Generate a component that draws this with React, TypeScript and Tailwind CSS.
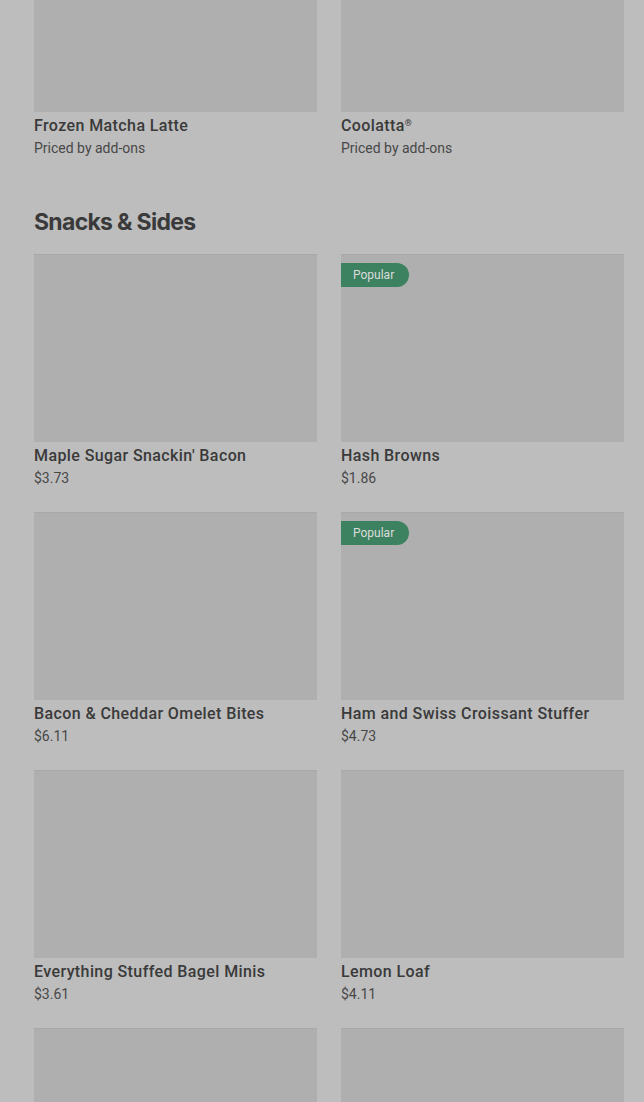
import React from "react";

type Item = { name: React.ReactNode; price: string; popular?: boolean };

const top: Item[] = [
  { name: "Frozen Matcha Latte", price: "Priced by add-ons" },
  {
    name: (
      <>
        Coolatta<sup className="text-[9px] top-[-0.6em]">®</sup>
      </>
    ),
    price: "Priced by add-ons",
  },
];

const snacks: Item[] = [
  { name: "Maple Sugar Snackin' Bacon", price: "$3.73" },
  { name: "Hash Browns", price: "$1.86", popular: true },
  { name: "Bacon & Cheddar Omelet Bites", price: "$6.11" },
  { name: "Ham and Swiss Croissant Stuffer", price: "$4.73", popular: true },
  { name: "Everything Stuffed Bagel Minis", price: "$3.61" },
  { name: "Lemon Loaf", price: "$4.11" },
  { name: "", price: "" },
  { name: "", price: "" },
];

function Card({ item }: { item: Item }) {
  return (
    <div className="flex flex-col">
      <div className="relative h-[188px] bg-[#afafaf] border-t border-[#a8a8a8]">
        {item.popular && (
          <div className="absolute left-0 top-[8px] h-[24px] w-[68px] rounded-r-full bg-[#3c8260] flex items-center pl-[12px] text-[12px] text-[#dcdcdc] font-['Roboto',sans-serif]">
            Popular
          </div>
        )}
      </div>
      {item.name && (
        <>
          <div className="mt-[2px] h-[24px] leading-[24px] text-[16px] font-medium tracking-[0.4px] text-[#3a3a3a] font-['Roboto',sans-serif]">
            {item.name}
          </div>
          <div className="h-[20px] leading-[20px] text-[14px] text-[#484848] font-['Roboto',sans-serif]">
            {item.price}
          </div>
        </>
      )}
    </div>
  );
}

export default function App() {
  return (
    <div className="w-[644px] h-[1102px] overflow-hidden bg-[#bdbdbd]">
      <div className="-mt-[76px] pl-[34px] pr-[20px]">
        <div className="grid grid-cols-2 gap-x-[24px]">
          {top.map((it, i) => (
            <Card key={i} item={it} />
          ))}
        </div>
        <h2 className="mt-[48px] h-[32px] leading-[32px] text-[23px] font-bold tracking-[-0.7px] text-[#3a3a3a] font-['Inter',sans-serif]">
          Snacks &amp; Sides
        </h2>
        <div className="mt-[16px] grid grid-cols-2 gap-x-[24px] gap-y-[24px]">
          {snacks.map((it, i) => (
            <Card key={i} item={it} />
          ))}
        </div>
      </div>
    </div>
  );
}
